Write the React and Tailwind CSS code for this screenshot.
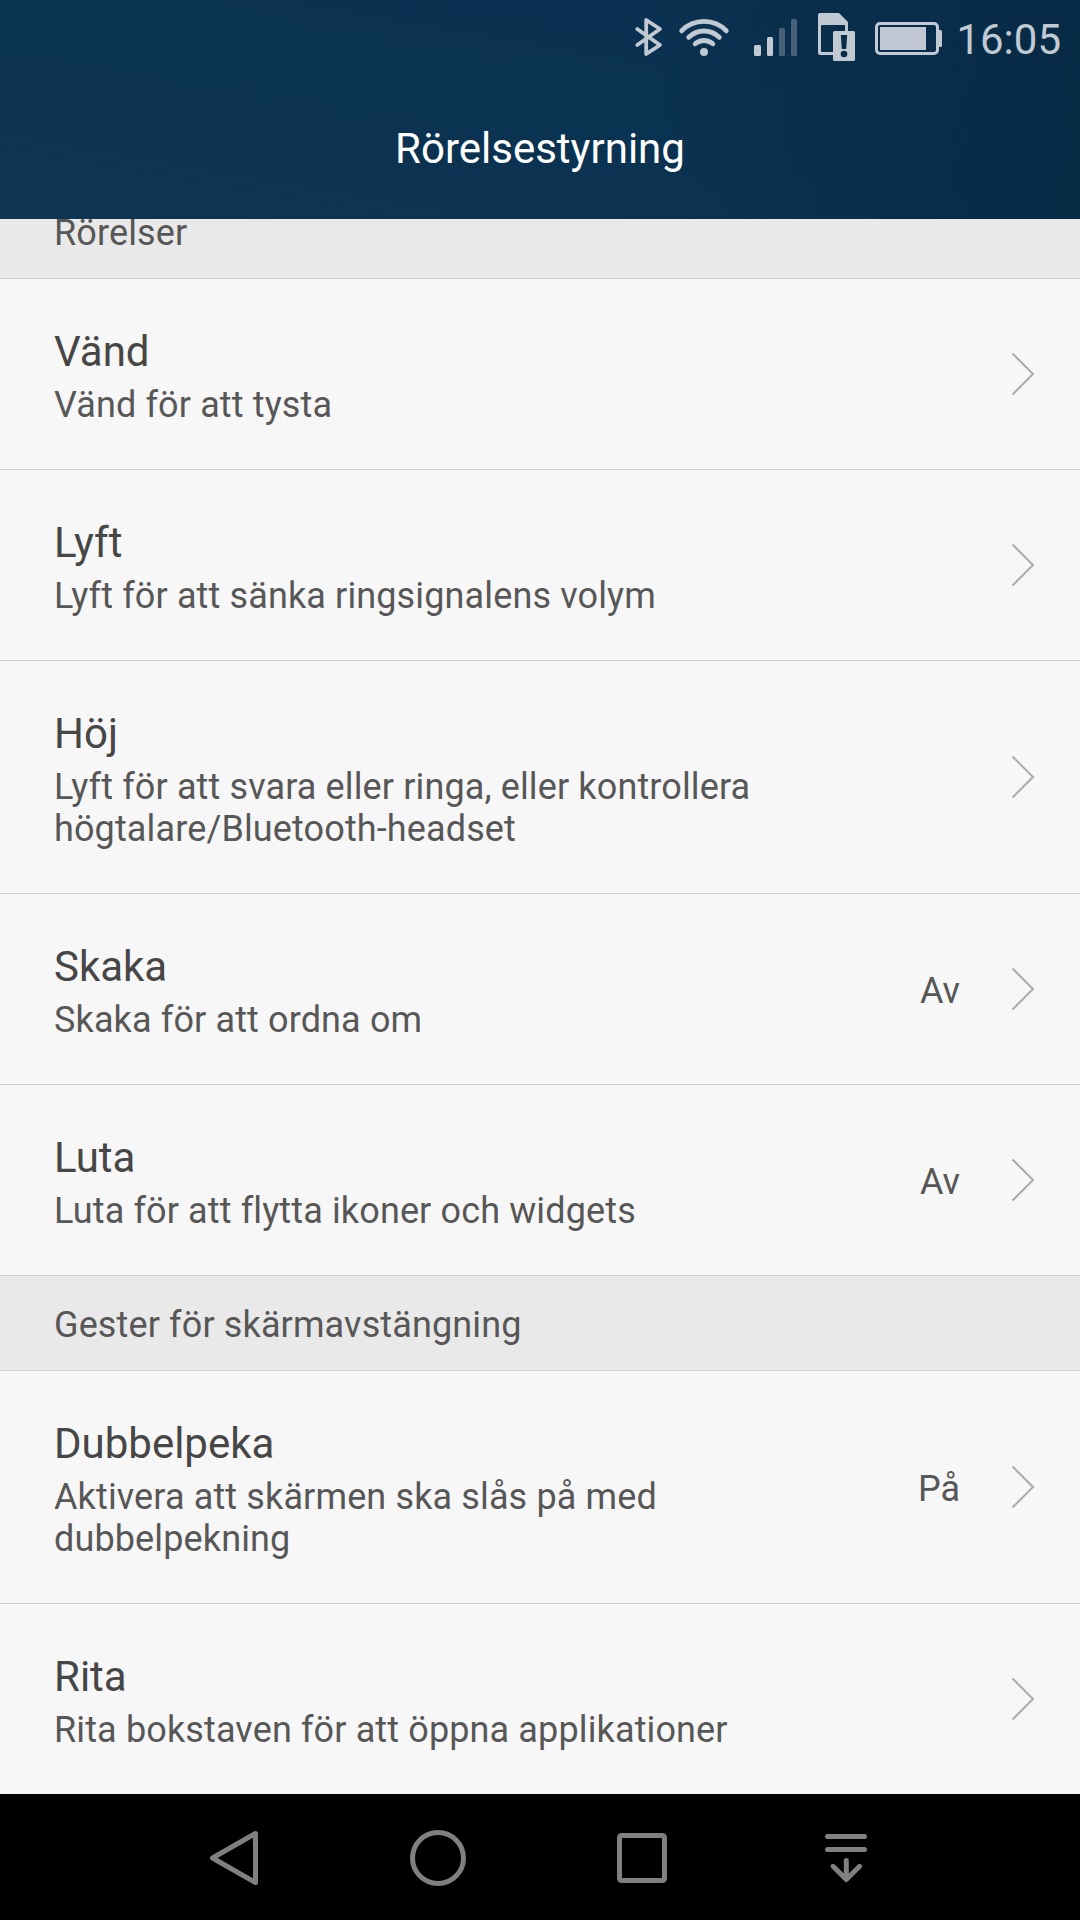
import React from 'react';

const motions = [
  { title: 'Vänd', text: 'Vänd för att tysta' },
  { title: 'Lyft', text: 'Lyft för att sänka ringsignalens volym' },
  { title: 'Höj', text: 'Lyft för att svara eller ringa, eller kontrollera högtalare/Bluetooth-headset' },
  { title: 'Skaka', text: 'Skaka för att ordna om', value: 'Av' },
  { title: 'Luta', text: 'Luta för att flytta ikoner och widgets', value: 'Av' },
];

const gestures = [
  { title: 'Dubbelpeka', text: 'Aktivera att skärmen ska slås på med dubbelpekning', value: 'På' },
  { title: 'Rita', text: 'Rita bokstaven för att öppna applikationer' },
];

function StatusBar() {
  return (
    <div className="flex h-[76px] items-start justify-end pr-[19px] text-[#c1cad2]">
      <svg className="mt-[17px] mr-[14px]" width="30" height="40" viewBox="0 0 30 40" fill="none" stroke="currentColor" strokeWidth="3.8" strokeLinecap="round" strokeLinejoin="round">
        <path d="M3.2 12 26 28 12.2 37V3L26 12 3.2 28" />
      </svg>
      <svg className="mt-[17px] mr-[23px]" width="52" height="40" viewBox="0 0 52 40" fill="none" stroke="currentColor" strokeWidth="4.8" strokeLinecap="round">
        <path d="M3.7 13.7A31.4 31.4 0 0 1 48.3 13.7" />
        <path d="M10.7 20.3A21.7 21.7 0 0 1 41.3 20.3" />
        <path d="M17.2 26.8A13.4 13.4 0 0 1 34.8 26.8" />
        <circle cx="26" cy="35" r="4" fill="currentColor" stroke="none" />
      </svg>
      <svg className="mt-[19px] mr-[20px]" width="45" height="37" viewBox="0 0 45 37" fill="currentColor">
        <rect x="1" y="26" width="7" height="11" rx="1.5" />
        <rect x="14" y="18" width="6" height="19" rx="1.5" />
        <rect x="26" y="9" width="6" height="28" rx="1.5" fill="#486178" />
        <rect x="38" y="0" width="6" height="37" rx="1.5" fill="#486178" />
      </svg>
      <svg className="mt-[13px] mr-[20px]" width="37" height="48" viewBox="0 0 37 48" fill="currentColor">
        <path fillRule="evenodd" d="M2 0H21L30 9V42H2.5A2.5 2.5 0 0 1 0 39.500V2A2 2 0 0 1 2 0ZM4 12A1 1 0 0 0 3 13V38A1 1 0 0 0 4 39H27V12Z" />
        <rect x="15" y="18" width="22" height="30" rx="1.5" />
        <path d="M22.800 22H29.200L28.200 36H23.800Z" fill="#072c49" />
        <circle cx="26" cy="41" r="3.3" fill="#072c49" />
      </svg>
      <svg className="mt-[22px] mr-[14px]" width="67" height="33" viewBox="0 0 67 33" fill="currentColor">
        <rect x="1.500" y="1.500" width="61" height="30" rx="3.500" fill="none" stroke="currentColor" strokeWidth="3" />
        <rect x="5" y="5" width="46" height="23" fill="#c1c8d3" />
        <path d="M64 8H65.500A1.500 1.500 0 0 1 67 9.500V23.500A1.500 1.500 0 0 1 65.500 25H64Z" />
      </svg>
      <div className="mt-[15px] text-[42px] leading-[49px]">16:05</div>
    </div>
  );
}

function Chevron() {
  return (
    <svg className="shrink-0" width="24" height="44" viewBox="0 0 24 44" fill="none" stroke="#acacac" strokeWidth="2">
      <path d="M1.500 1.500 22 22 1.500 42.500" />
    </svg>
  );
}

function Section({ children }) {
  return (
    <div className="h-[95px] border-b border-[#d0d0d0] bg-[#e9e9e9] pt-[28px] pl-[54px] text-[36px] leading-[42px] tracking-[0.13px] text-[#575757]">
      {children}
    </div>
  );
}

function Row({ title, text, value }) {
  return (
    <div className="flex items-center border-b border-[#d0d0d0] pr-[45px] pl-[54px]">
      <div className="flex-1 pt-[48px] pb-[43px]">
        <div className="text-[42px] leading-[49px] text-[#464646]">{title}</div>
        <div className="mt-2 text-[36px] leading-[42px] tracking-[0.13px] text-[#575757]">{text}</div>
      </div>
      {value && <div className="ml-8 pt-[3px] text-[36px] leading-[42px] text-[#575757]">{value}</div>}
      <div className="ml-[51px]">
        <Chevron />
      </div>
    </div>
  );
}

function NavBar() {
  return (
    <div className="flex h-[126px] shrink-0 items-center justify-center bg-black">
      <div className="flex w-[816px] justify-around [&>svg]:size-[60px]">
        <svg viewBox="0 0 60 60" fill="none" stroke="#808080" strokeWidth="5" strokeLinejoin="round">
          <path d="M8.500 31 51.500 6.500V55.500Z" />
        </svg>
        <svg viewBox="0 0 60 60" fill="none" stroke="#808080" strokeWidth="5">
          <circle cx="30" cy="31" r="25.500" />
        </svg>
        <svg viewBox="0 0 60 60" fill="none" stroke="#808080" strokeWidth="5">
          <rect x="7.500" y="8.500" width="45" height="45" rx="2" />
        </svg>
        <svg viewBox="0 0 60 60" fill="none" stroke="#808080" strokeWidth="5" strokeLinecap="round" strokeLinejoin="round">
          <path d="M11.500 9.500H48.500M11.500 22.500H48.500M30.300 33.500V52M17 39.300 30.300 52.500 43.600 39.300" />
        </svg>
      </div>
    </div>
  );
}

function App() {
  return (
    <div className="flex h-[1920px] w-[1080px] flex-col overflow-hidden bg-[#f7f7f7] font-['Roboto',sans-serif]">
      <div className="h-[219px] shrink-0 bg-[linear-gradient(97deg,transparent_60%,#072a45_100%),linear-gradient(10deg,#0e3652_0%,#0a3251_50%,#0a3050_100%)]">
        <StatusBar />
        <div className="pt-[48px] text-center text-[42px] leading-[49px] text-white">Rörelsestyrning</div>
      </div>
      <div className="min-h-0 flex-1 overflow-hidden">
        {/* list is scrolled a little, so the first heading sits half under the title bar */}
        <div className="-mt-[35px]">
          <Section>Rörelser</Section>
          {motions.map((item) => (
            <Row key={item.title} {...item} />
          ))}
          <Section>Gester för skärmavstängning</Section>
          {gestures.map((item) => (
            <Row key={item.title} {...item} />
          ))}
        </div>
      </div>
      <NavBar />
    </div>
  );
}

export default App;
